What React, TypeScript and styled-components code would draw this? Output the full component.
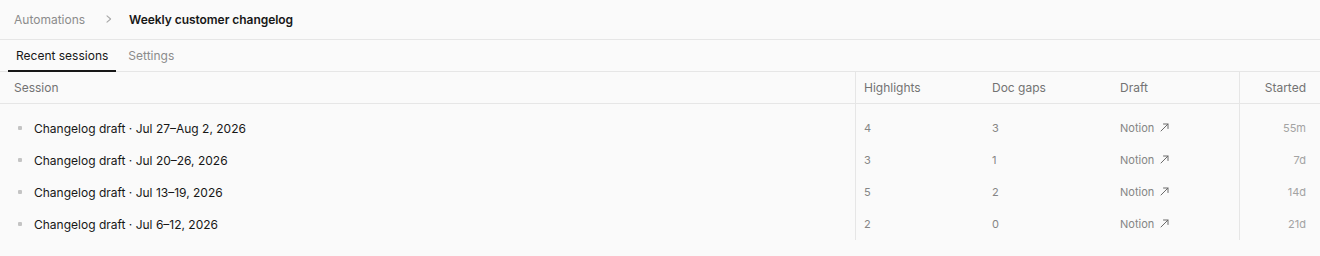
import React from "react";
import styled, { createGlobalStyle } from "styled-components";

const Global = createGlobalStyle`
  html, body { margin: 0; padding: 0; background: #fafafa; }
  body { font-family: Inter, "Noto Sans", sans-serif; color: #171717; -webkit-font-smoothing: antialiased; }
  * { box-sizing: border-box; }
`;

const Page = styled.div`
  width: 1320px;
  height: 256px;
  background: #fafafa;
  display: flex;
  flex-direction: column;
`;

const Breadcrumb = styled.div`
  height: 40px;
  display: flex;
  align-items: center;
  padding: 0 14px 1px;
  border-bottom: 1px solid #e6e6e6;
  font-size: 12px;
`;

const Crumb = styled.span`
  color: #8c8c8c;
`;

const Chevron = styled.span`
  display: inline-flex;
  margin: 0 17px 0 21px;
  color: #a8a8a8;
`;

const Title = styled.span`
  font-weight: 600;
  color: #171717;
  letter-spacing: -0.05px;
`;

const Tabs = styled.div`
  height: 32px;
  display: flex;
  padding: 0 8px;
  gap: 4px;
  border-bottom: 1px solid #e6e6e6;
`;

const Tab = styled.button<{ $active?: boolean }>`
  all: unset;
  display: flex;
  align-items: center;
  padding: 0 8px;
  font-size: 12px;
  font-family: Inter, sans-serif;
  color: ${(p) => (p.$active ? "#171717" : "#8c8c8c")};
  box-shadow: ${(p) => (p.$active ? "inset 0 -1px 0 #171717" : "none")};
  margin-bottom: -1px;
  border-bottom: 1px solid ${(p) => (p.$active ? "#171717" : "transparent")};
`;

const Table = styled.div`
  display: flex;
  flex-direction: column;
`;

const Row = styled.div<{ $head?: boolean }>`
  display: grid;
  grid-template-columns: 1fr 128px 128px 128px 80px;
  height: 32px;
  ${(p) => (p.$head ? "border-bottom: 1px solid #e6e6e6;" : "")}
`;

const Body = styled.div`
  display: flex;
  flex-direction: column;
`;

const Cell = styled.div<{ $divider?: boolean; $first?: boolean; $right?: boolean; $tone?: string; $size?: number }>`
  display: flex;
  align-items: center;
  padding: 0 ${(p) => (p.$right ? "14px" : "8px")} 0 ${(p) => (p.$first ? "14px" : "8px")};
  justify-content: ${(p) => (p.$right ? "flex-end" : "flex-start")};
  border-right: ${(p) => (p.$divider ? "1px solid #e6e6e6" : "none")};
  font-size: ${(p) => p.$size ?? 11}px;
  color: ${(p) => p.$tone ?? "#858585"};
  white-space: nowrap;
`;

const Spacer = styled(Row)`
  height: 8px;
`;

const Bullet = styled.span`
  width: 4px;
  height: 4px;
  border-radius: 1px;
  background: #c4c4c4;
  margin: 0 12px 0 4px;
`;

const SessionName = styled.span`
  font-size: 12px;
  color: #171717;
`;

const DraftLink = styled.span`
  display: inline-flex;
  align-items: center;
  gap: 6px;
  color: #858585;
`;

const ExternalArrow = () => (
  <svg width="9" height="9" viewBox="0 0 9 9" fill="none" style={{ marginTop: -1 }}>
    <path d="M1 8 L8 1 M3.5 1 H8 V5.5" stroke="#6b6b6b" strokeWidth="1" strokeLinecap="round" strokeLinejoin="round" />
  </svg>
);

const rows = [
  { name: "Changelog draft · Jul 27–Aug 2, 2026", h: 4, g: 3, t: "55m" },
  { name: "Changelog draft · Jul 20–26, 2026", h: 3, g: 1, t: "7d" },
  { name: "Changelog draft · Jul 13–19, 2026", h: 5, g: 2, t: "14d" },
  { name: "Changelog draft · Jul 6–12, 2026", h: 2, g: 0, t: "21d" },
];

export default function App() {
  return (
    <Page>
      <Global />
      <Breadcrumb>
        <Crumb>Automations</Crumb>
        <Chevron>
          <svg width="6" height="8" viewBox="0 0 6 8" fill="none">
            <path d="M1 0.8 L4.6 4 L1 7.2" stroke="currentColor" strokeWidth="1.1" strokeLinecap="round" strokeLinejoin="round" />
          </svg>
        </Chevron>
        <Title>Weekly customer changelog</Title>
      </Breadcrumb>
      <Tabs>
        <Tab $active>Recent sessions</Tab>
        <Tab>Settings</Tab>
      </Tabs>
      <Table>
        <Row $head>
          <Cell $first $divider $size={12} $tone="#737373">Session</Cell>
          <Cell $size={12} $tone="#737373">Highlights</Cell>
          <Cell $size={12} $tone="#737373">Doc gaps</Cell>
          <Cell $divider $size={12} $tone="#737373">Draft</Cell>
          <Cell $right $size={12} $tone="#737373">Started</Cell>
        </Row>
        <Body>
          <Spacer>
            <Cell $divider />
            <Cell />
            <Cell />
            <Cell $divider />
            <Cell />
          </Spacer>
          {rows.map((r) => (
            <Row key={r.name}>
              <Cell $first $divider>
                <Bullet />
                <SessionName>{r.name}</SessionName>
              </Cell>
              <Cell>{r.h}</Cell>
              <Cell>{r.g}</Cell>
              <Cell $divider>
                <DraftLink>
                  Notion
                  <ExternalArrow />
                </DraftLink>
              </Cell>
              <Cell $right $tone="#a3a3a3">{r.t}</Cell>
            </Row>
          ))}
        </Body>
      </Table>
    </Page>
  );
}
